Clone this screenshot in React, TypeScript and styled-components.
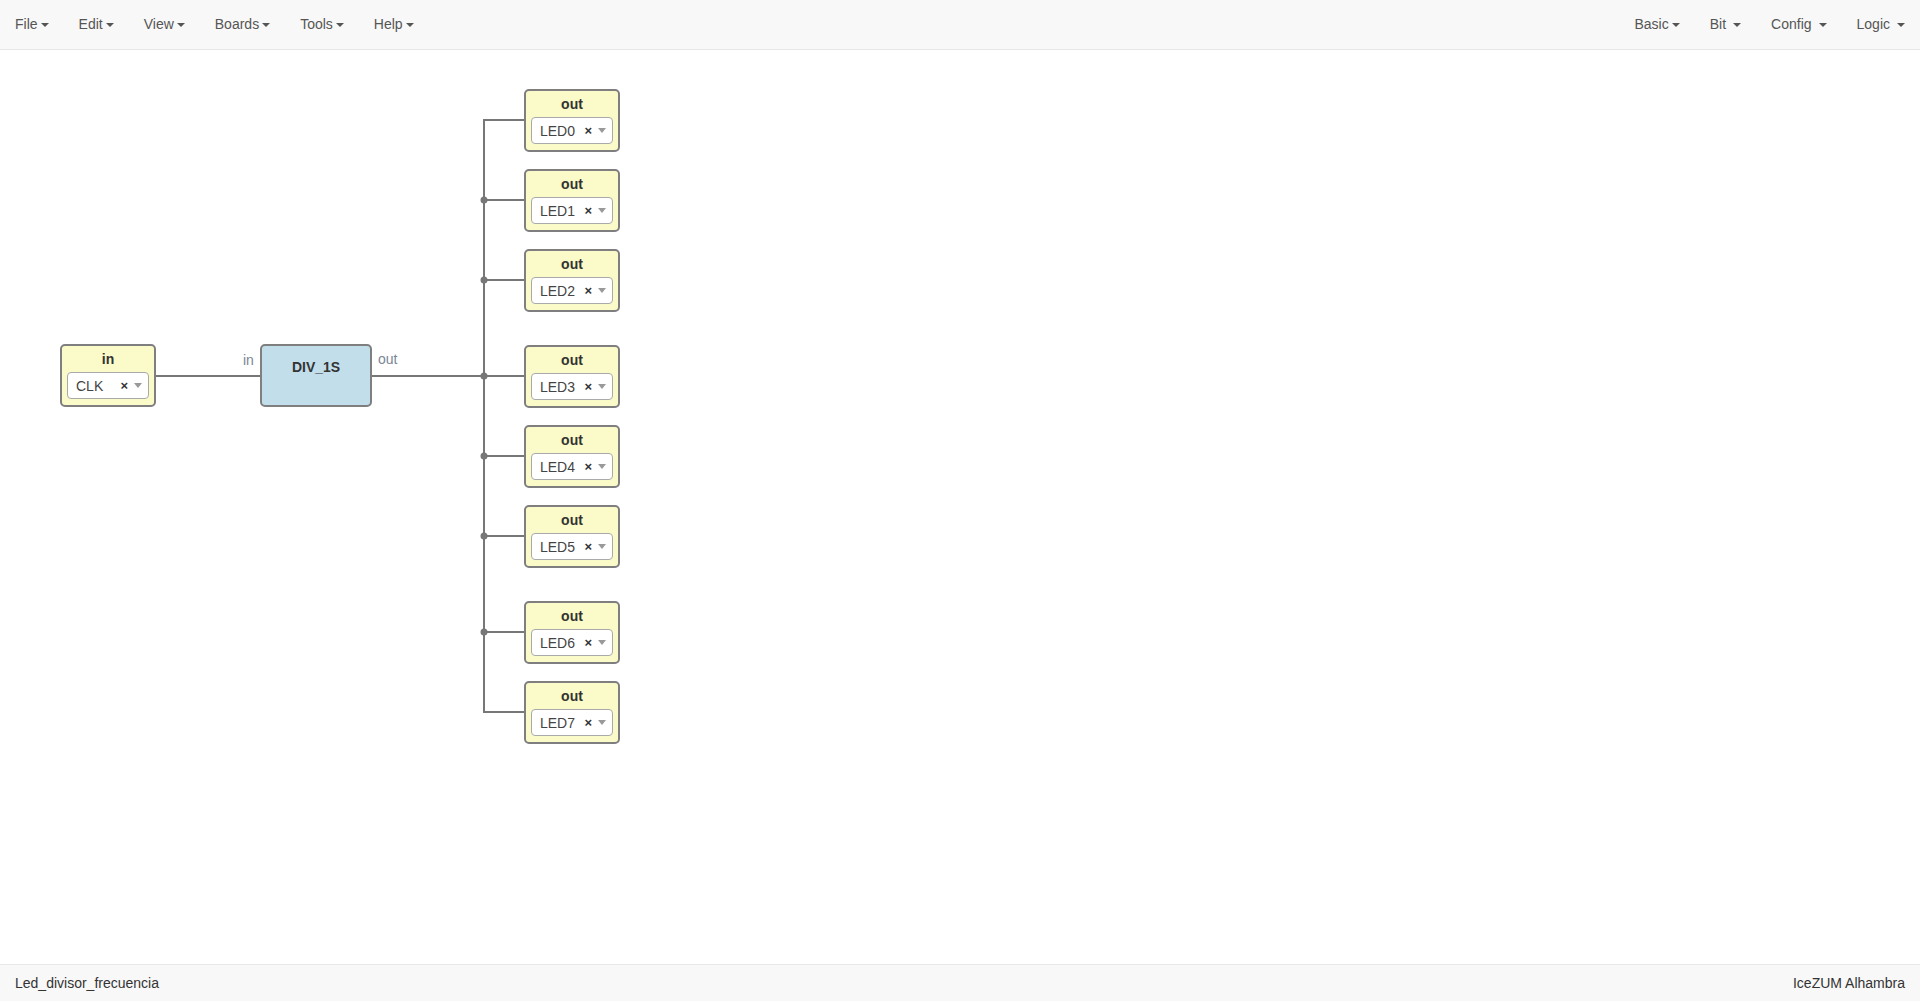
import styled, { createGlobalStyle } from 'styled-components'

const GlobalStyle = createGlobalStyle`
  html, body {
    margin: 0;
    padding: 0;
    height: 100%;
  }
  body {
    font-family: "Liberation Sans", Arial, Helvetica, sans-serif;
    font-size: 14px;
    color: #333;
    background: #fff;
  }
  #root {
    height: 100%;
  }
`

const NAV_H = 50

const leftMenus = ['File', 'Edit', 'View', 'Boards', 'Tools', 'Help']
const rightMenus = ['Basic', 'Bit', 'Config', 'Logic']

// salidas: nombre y posición superior (coordenadas de página)
const outputs = [
  { name: 'LED0', y: 89 },
  { name: 'LED1', y: 169 },
  { name: 'LED2', y: 249 },
  { name: 'LED3', y: 345 },
  { name: 'LED4', y: 425 },
  { name: 'LED5', y: 505 },
  { name: 'LED6', y: 601 },
  { name: 'LED7', y: 681 },
]

const BUS_X = 484
const OUT_X = 524
const BLOCK_H = 63

const Caret = ({ spaced }: { spaced?: boolean }) => (
  <CaretIcon viewBox="0 0 8 4" aria-hidden $spaced={spaced}>
    <path d="M0 0 L8 0 L4 4 Z" fill="currentColor" />
  </CaretIcon>
)

const Select = ({ value }: { value: string }) => (
  <SelectBox>
    <SelectValue>{value}</SelectValue>
    <Clear>×</Clear>
    <SelectArrow />
  </SelectBox>
)

const App = () => {
  const mids = outputs.map(o => o.y + 31 - NAV_H)
  const mainY = 376 - NAV_H

  return (
    <>
      <GlobalStyle />
      <Page>
        <Navbar>
          <NavGroup>
            {leftMenus.map(m => (
              <NavItem key={m}>
                {m}
                <Caret />
              </NavItem>
            ))}
          </NavGroup>
          <NavGroup>
            {rightMenus.map(m => (
              <NavItem key={m}>
                {m}
                <Caret spaced={m !== 'Basic'} />
              </NavItem>
            ))}
          </NavGroup>
        </Navbar>

        <Canvas>
          <Wires width="1920" height="920">
            <g stroke="#777" strokeWidth="2" fill="none">
              <path d={`M155 ${mainY} L260 ${mainY}`} />
              <path d={`M372 ${mainY} L${BUS_X} ${mainY}`} />
              <path d={`M${BUS_X} ${mids[0]} L${BUS_X} ${mids[mids.length - 1]}`} />
              {mids.map((y, i) => (
                <path key={i} d={`M${BUS_X - (i === 0 || i === mids.length - 1 ? 1 : 0)} ${y} L${OUT_X} ${y}`} />
              ))}
            </g>
            <g fill="#777">
              {mids.slice(1, -1).map((y, i) => (
                <circle key={i} cx={BUS_X} cy={y} r="3.5" />
              ))}
            </g>
          </Wires>

          <PortLabel style={{ left: 243, top: 352 - NAV_H }}>in</PortLabel>
          <PortLabel style={{ left: 378, top: 351 - NAV_H }}>out</PortLabel>

          <Block $kind="io" style={{ left: 60, top: 344 - NAV_H }}>
            <BlockTitle>in</BlockTitle>
            <Select value="CLK" />
          </Block>

          <Block $kind="code" style={{ left: 260, top: 344 - NAV_H, width: 112 }}>
            <CodeTitle>DIV_1S</CodeTitle>
          </Block>

          {outputs.map(o => (
            <Block key={o.name} $kind="io" style={{ left: OUT_X, top: o.y - NAV_H }}>
              <BlockTitle>out</BlockTitle>
              <Select value={o.name} />
            </Block>
          ))}
        </Canvas>

        <Footer>
          <span>Led_divisor_frecuencia</span>
          <span>IceZUM Alhambra</span>
        </Footer>
      </Page>
    </>
  )
}

const Page = styled.div`
  display: flex;
  flex-direction: column;
  height: 100vh;
  overflow: hidden;
`

const Navbar = styled.nav`
  box-sizing: border-box;
  height: ${NAV_H}px;
  flex: none;
  display: flex;
  align-items: center;
  justify-content: space-between;
  padding: 0 15px;
  background: #f8f8f8;
  border-bottom: 1px solid #e7e7e7;
`

const NavGroup = styled.div`
  display: flex;
  align-items: center;
  gap: 30px;
  height: 100%;
  padding-bottom: 1px;
`

const NavItem = styled.div`
  display: flex;
  align-items: center;
  color: #555;
  font-size: 14px;
  cursor: pointer;
`

const CaretIcon = styled.svg<{ $spaced?: boolean }>`
  width: 8px;
  height: 4px;
  margin-left: ${p => (p.$spaced ? '7px' : '3px')};
  margin-top: 1px;
  color: #555;
`

const Canvas = styled.main`
  position: relative;
  flex: 1;
  background: #fff;
`

const Wires = styled.svg`
  position: absolute;
  left: 0;
  top: 0;
`

const Block = styled.div<{ $kind: 'io' | 'code' }>`
  position: absolute;
  box-sizing: border-box;
  width: 96px;
  height: ${BLOCK_H}px;
  border: 2px solid #7f7f7f;
  border-radius: 5px;
  background: ${p => (p.$kind === 'io' ? '#fbfbc9' : '#c2deea')};
`

const BlockTitle = styled.div`
  padding-top: 4px;
  line-height: 18px;
  text-align: center;
  font-weight: bold;
  font-size: 14px;
  color: #333;
`

const CodeTitle = styled.div`
  padding-top: 12px;
  line-height: 18px;
  text-align: center;
  font-weight: bold;
  font-size: 14px;
  color: #333;
`

const SelectBox = styled.div`
  box-sizing: border-box;
  height: 27px;
  margin: 4px 5px 0;
  display: flex;
  align-items: center;
  padding: 0 6px 0 8px;
  background: #fff;
  border: 1px solid #aaa;
  border-radius: 4px;
`

const SelectValue = styled.span`
  flex: 1;
  font-size: 14px;
  color: #444;
`

const Clear = styled.span`
  font-size: 13px;
  font-weight: bold;
  color: #333;
  margin-right: 6px;
`

const SelectArrow = styled.span`
  width: 0;
  height: 0;
  border-left: 4px solid transparent;
  border-right: 4px solid transparent;
  border-top: 5px solid #999;
`

const PortLabel = styled.span`
  position: absolute;
  font-size: 14px;
  color: #7a8694;
`

const Footer = styled.footer`
  box-sizing: border-box;
  flex: none;
  height: 37px;
  display: flex;
  align-items: center;
  justify-content: space-between;
  padding: 0 15px 1px;
  background: #f8f8f8;
  border-top: 1px solid #e7e7e7;
  color: #333;
  font-size: 14px;
`

export default App
